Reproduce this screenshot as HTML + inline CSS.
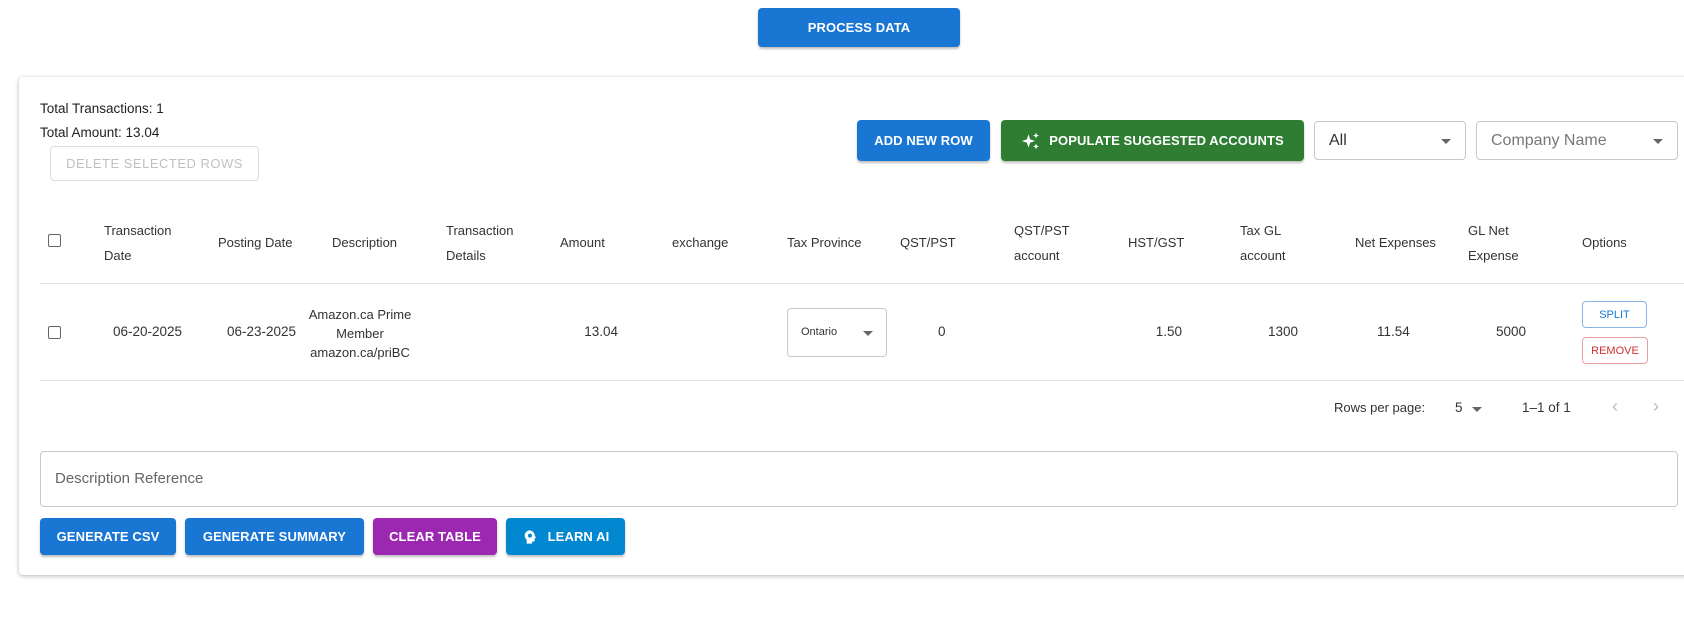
<!DOCTYPE html>
<html><head><meta charset="utf-8"><style>
*{box-sizing:border-box;margin:0;padding:0}
body{width:1684px;height:618px;background:#fff;font-family:"Liberation Sans",sans-serif;color:#222;position:relative;overflow:hidden}
.a{position:absolute;white-space:nowrap}
.btn{position:absolute;border-radius:4px;color:#fff;font-size:13px;font-weight:bold;display:flex;align-items:center;justify-content:center;box-shadow:0 2px 2px rgba(0,0,0,.25);letter-spacing:.1px}
.card{position:absolute;left:19px;top:77px;width:1700px;height:498px;background:#fff;border-radius:4px;box-shadow:0 1px 4px rgba(0,0,0,.3)}
.h{position:absolute;font-size:13px;color:#333;line-height:25px}
.c{position:absolute;font-size:13.5px;color:#333}
.sel{position:absolute;border:1px solid #c8c8c8;border-radius:4px;background:#fff}
.arr{position:absolute;width:0;height:0;border-left:5px solid transparent;border-right:5px solid transparent;border-top:5px solid #666}
.cb{position:absolute;width:13px;height:13px;border:1px solid #666;border-radius:2px}
</style></head><body>
<div class="btn" style="left:758px;top:8px;width:202px;height:39px;background:#1976d2">PROCESS DATA</div>
<div class="card"></div>
<div class="a" style="left:40px;top:101px;font-size:13.5px">Total Transactions: 1</div>
<div class="a" style="left:40px;top:125px;font-size:13.5px">Total Amount: 13.04</div>
<div class="a" style="left:50px;top:146px;width:209px;height:35px;border:1px solid #ddd;border-radius:4px;color:#c0c0c0;font-size:13px;display:flex;align-items:center;justify-content:center;letter-spacing:.5px">DELETE SELECTED ROWS</div>
<div class="btn" style="left:857px;top:120px;width:133px;height:41px;background:#1976d2">ADD NEW ROW</div>
<div class="btn" style="left:1001px;top:120px;width:303px;height:41px;background:#2e7d32"><svg width="20" height="20" viewBox="0 0 24 24" style="margin-right:8px"><path fill="#fff" d="M9 4l2 6 6 2-6 2-2 6-2-6-6-2 6-2zM18 2l1 2.5 2.5 1-2.5 1L18 9l-1-2.5L14.5 5.5 17 4.5zM18 15l1 2.5 2.5 1-2.5 1L18 22l-1-2.5-2.5-1 2.5-1z"/></svg>POPULATE SUGGESTED ACCOUNTS</div>
<div class="sel" style="left:1314px;top:121px;width:152px;height:39px"><span class="a" style="left:14px;top:10px;font-size:16px;color:#333">All</span><span class="arr" style="right:14px;top:17px"></span></div>
<div class="sel" style="left:1476px;top:121px;width:202px;height:39px"><span class="a" style="left:14px;top:10px;font-size:16px;color:#777">Company Name</span><span class="arr" style="right:14px;top:17px"></span></div>
<div class="cb" style="left:48px;top:234px"></div>
<div class="h" style="left:104px;top:218px">Transaction<br>Date</div>
<div class="h" style="left:218px;top:230px">Posting Date</div>
<div class="h" style="left:332px;top:230px">Description</div>
<div class="h" style="left:446px;top:218px">Transaction<br>Details</div>
<div class="h" style="left:560px;top:230px">Amount</div>
<div class="h" style="left:672px;top:230px">exchange</div>
<div class="h" style="left:787px;top:230px">Tax Province</div>
<div class="h" style="left:900px;top:230px">QST/PST</div>
<div class="h" style="left:1014px;top:218px">QST/PST<br>account</div>
<div class="h" style="left:1128px;top:230px">HST/GST</div>
<div class="h" style="left:1240px;top:218px">Tax GL<br>account</div>
<div class="h" style="left:1355px;top:230px">Net Expenses</div>
<div class="h" style="left:1468px;top:218px">GL Net<br>Expense</div>
<div class="h" style="left:1582px;top:230px">Options</div>
<div class="a" style="left:40px;top:283px;width:1644px;height:1px;background:#e0e0e0"></div>
<div class="cb" style="left:48px;top:326px"></div>
<div class="c" style="left:113px;top:324px">06-20-2025</div>
<div class="c" style="left:227px;top:324px">06-23-2025</div>
<div class="c" style="left:295px;top:305px;width:130px;text-align:center;line-height:19px;font-size:13px">Amazon.ca Prime<br>Member<br>amazon.ca/priBC</div>
<div class="c" style="left:560px;top:324px;width:58px;text-align:right">13.04</div>
<div class="sel" style="left:787px;top:308px;width:100px;height:49px"><span class="a" style="left:13px;top:17px;font-size:11px;color:#333">Ontario</span><span class="arr" style="right:13px;top:22px"></span></div>
<div class="c" style="left:938px;top:324px">0</div>
<div class="c" style="left:1120px;top:324px;width:62px;text-align:right">1.50</div>
<div class="c" style="left:1268px;top:324px">1300</div>
<div class="c" style="left:1377px;top:324px">11.54</div>
<div class="c" style="left:1496px;top:324px">5000</div>
<div class="a" style="left:1582px;top:301px;width:65px;height:27px;border:1px solid #8ab4e8;border-radius:4px;color:#1976d2;font-size:11px;display:flex;align-items:center;justify-content:center">SPLIT</div>
<div class="a" style="left:1582px;top:337px;width:66px;height:27px;border:1px solid #e8a0a0;border-radius:4px;color:#d32f2f;font-size:11px;display:flex;align-items:center;justify-content:center">REMOVE</div>
<div class="a" style="left:40px;top:380px;width:1644px;height:1px;background:#e0e0e0"></div>
<div class="c" style="left:1334px;top:400px;font-size:13px">Rows per page:</div>
<div class="c" style="left:1455px;top:400px">5</div>
<span class="arr" style="left:1472px;top:407px"></span>
<div class="c" style="left:1522px;top:400px">1–1 of 1</div>
<div class="c" style="left:1612px;top:396px;font-size:18px;color:#bbb">‹</div>
<div class="c" style="left:1653px;top:396px;font-size:18px;color:#bbb">›</div>
<div class="a" style="left:40px;top:451px;width:1638px;height:56px;border:1px solid #c8c8c8;border-radius:4px"><span class="a" style="left:14px;top:18px;font-size:15px;color:#666">Description Reference</span></div>
<div class="btn" style="left:40px;top:518px;width:136px;height:37px;background:#1976d2">GENERATE CSV</div>
<div class="btn" style="left:185px;top:518px;width:179px;height:37px;background:#1976d2">GENERATE SUMMARY</div>
<div class="btn" style="left:373px;top:518px;width:124px;height:37px;background:#9c27b0">CLEAR TABLE</div>
<div class="btn" style="left:506px;top:518px;width:119px;height:37px;background:#0288d1"><svg width="16" height="16" viewBox="0 0 24 24" style="margin-right:10px"><path fill="#fff" d="M12 2a8 8 0 0 0-8 8c0 2.5 1.2 4.5 3 6v6h8v-3h2a2 2 0 0 0 2-2v-3l2-1-2-3a8 8 0 0 0-7-8zm0 5a3 3 0 1 1 0 6 3 3 0 0 1 0-6z"/></svg>LEARN AI</div>
</body></html>
